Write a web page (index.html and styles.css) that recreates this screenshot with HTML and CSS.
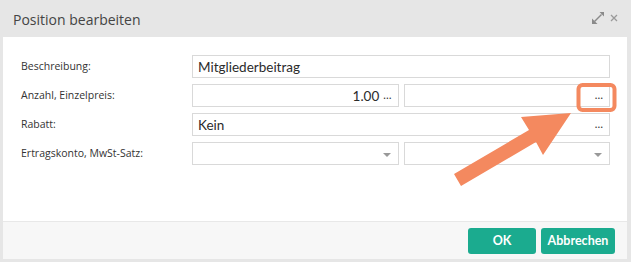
FILE: index.html
```html
<!DOCTYPE html>
<html lang="de">
<head>
    <meta charset="UTF-8">
    <meta name="viewport" content="width=device-width, initial-scale=1.0">
    <title>Position bearbeiten</title>
    <link rel="stylesheet" href="styles.css">
</head>
<body>
    <div class="dialog">
        <div class="titlebar">
            <span class="title">Position bearbeiten</span>
            <span class="tools">
                <svg class="tool-expand" width="12" height="12" viewBox="0 0 12 12">
                    <line x1="2.5" y1="9.5" x2="9.5" y2="2.5" stroke="#8a8a8a" stroke-width="1.4"/>
                    <polygon points="0,12 0,6.5 5.5,12" fill="#8a8a8a"/>
                    <polygon points="12,0 12,4.5 7.5,0" fill="#8a8a8a"/>
                </svg>
                <svg class="tool-close" width="8" height="8" viewBox="0 0 8 8">
                    <path d="M1 1 L7 7 M7 1 L1 7" stroke="#9a9a9a" stroke-width="1.3"/>
                </svg>
            </span>
        </div>

        <div class="panel">
            <div class="form">
                <label>Beschreibung:</label>
                <div class="field"><span class="value">Mitgliederbeitrag</span></div>

                <label>Anzahl, Einzelpreis:</label>
                <div class="pair">
                    <div class="field num"><span class="value">1.00</span><span class="dots">&hellip;</span></div>
                    <div class="field num"><span class="dots">&hellip;</span></div>
                </div>

                <label>Rabatt:</label>
                <div class="field"><span class="value">Kein</span><span class="dots">&hellip;</span></div>

                <label>Ertragskonto, MwSt-Satz:</label>
                <div class="pair">
                    <div class="field select"><span class="caret"></span></div>
                    <div class="field select"><span class="caret"></span></div>
                </div>
            </div>

            <div class="footer">
                <button class="btn btn-ok">OK</button>
                <button class="btn btn-cancel">Abbrechen</button>
            </div>
        </div>

        <!-- hint overlay: box around the button + arrow -->
        <svg class="callout" width="631" height="262" viewBox="0 0 631 262">
            <rect x="578.5" y="85" width="36" height="25" rx="4" fill="none" stroke="#f4895f" stroke-width="4"/>
            <polygon points="454,174 529,130 521,117 571,113 543,155 536,142 461,186" fill="#f4895f"/>
        </svg>
    </div>
</body>
</html>
```

FILE: styles.css
```css
html, body {
    margin: 0;
    padding: 0;
}
body {
    background-color: #e6e6e6;
    font-family: 'Open Sans', 'Noto Sans', sans-serif;
    color: #333;
}
.dialog {
    position: relative;
    height: 262px;
    display: flex;
    flex-direction: column;
}
.titlebar {
    height: 37px;
    display: flex;
    align-items: center;
    justify-content: space-between;
    padding: 0 13px 0 13px;
}
.title {
    font-size: 14px;
    color: #444;
    margin-top: 2px;
}
.tools {
    display: flex;
    align-items: center;
    gap: 6px;
    margin-top: -1px;
}
.panel {
    flex: 1;
    margin: 0 4px 3px 3px;
    background-color: #fff;
    display: flex;
    flex-direction: column;
}
.form {
    flex: 1;
    display: grid;
    grid-template-columns: 171px 1fr;
    grid-auto-rows: 23px;
    row-gap: 6px;
    padding: 18px 17px 0 18px;
    align-content: start;
}
.form label {
    font-size: 10.5px;
    color: #333;
    display: flex;
    align-items: center;
    margin-top: -2px;
}
.pair {
    display: flex;
    gap: 5px;
}
.pair .field {
    flex: 1;
}
.field {
    box-sizing: border-box;
    height: 23px;
    border: 1px solid #d9d9d9;
    display: flex;
    align-items: center;
    padding: 0 5px;
    font-family: Lato, 'Open Sans', sans-serif;
    font-size: 13.5px;
    color: #2b2b2b;
}
.field .value {
    flex: 1;
}
.field.num {
    justify-content: flex-end;
}
.field.num .value {
    flex: none;
}
.dots {
    font-size: 11px;
    color: #333;
    margin-left: 4px;
    margin-right: 1px;
    margin-top: -2px;
}
.field.select {
    justify-content: flex-end;
    padding-right: 7px;
}
.caret {
    width: 0;
    height: 0;
    border-left: 4px solid transparent;
    border-right: 4px solid transparent;
    border-top: 4px solid #999;
    margin-top: 2px;
}
.footer {
    height: 37px;
    border-top: 1px solid #e8e8e8;
    background-color: #f7f7f7;
    display: flex;
    justify-content: flex-end;
    align-items: center;
    gap: 5px;
    padding: 0 12px;
}
.btn {
    height: 26px;
    border: none;
    border-radius: 3px;
    background-color: #1bab8f;
    color: #fff;
    font-family: Lato, 'Open Sans', sans-serif;
    font-weight: bold;
    font-size: 12.5px;
    padding: 0;
    cursor: pointer;
}
.btn-ok {
    width: 68px;
}
.btn-cancel {
    width: 74px;
}
.callout {
    position: absolute;
    top: 0;
    left: 0;
    pointer-events: none;
}
```
